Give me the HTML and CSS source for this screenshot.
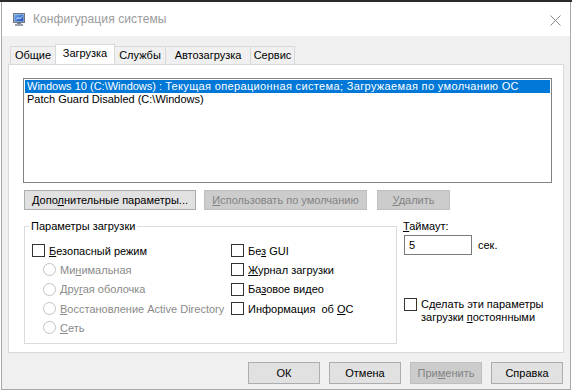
FILE: index.html
```html
<!DOCTYPE html>
<html lang="ru">
<head>
<meta charset="utf-8">
<title>Конфигурация системы</title>
<link rel="stylesheet" href="styles.css">
</head>
<body>
<div class="strip"></div>
<div class="window">
  <div class="titlebar">
    <svg class="app-icon" width="12" height="13" viewBox="0 0 12 13">
      <defs>
        <linearGradient id="scr" x1="0" y1="0" x2="1" y2="1">
          <stop offset="0" stop-color="#6aa8f0"/>
          <stop offset="1" stop-color="#1c4fb8"/>
        </linearGradient>
      </defs>
      <rect x="0.5" y="0.5" width="11" height="9" fill="#c8ccd6" stroke="#6f7685"/>
      <rect x="1.5" y="1.5" width="9" height="7" fill="url(#scr)"/>
      <path d="M3 6.5 L5 4.5 L6.5 6 L9 3.5" stroke="#e8f0ff" stroke-width="1" fill="none"/>
      <rect x="4" y="10" width="4" height="1" fill="#7d8494"/>
      <rect x="2" y="11" width="8" height="2" fill="#9aa0ad"/>
    </svg>
    <span class="title">Конфигурация системы</span>
    <svg class="close" width="11" height="11" viewBox="0 0 11 11">
      <path d="M0.5 0.5 L10.5 10.5 M10.5 0.5 L0.5 10.5" stroke="#8a8a8a" stroke-width="1"/>
    </svg>
  </div>
  <div class="content">
    <div class="tabs">
      <div class="tab t1">Общие</div>
      <div class="tab t2 active">Загрузка</div>
      <div class="tab t3">Службы</div>
      <div class="tab t4">Автозагрузка</div>
      <div class="tab t5">Сервис</div>
    </div>
    <div class="panel">
      <div class="listbox">
        <div class="item selected">Windows 10 (C:\Windows) : <span class="cyr">Текущая операционная система; Загружаемая по умолчанию ОС</span></div>
        <div class="item">Patch Guard Disabled (C:\Windows)</div>
      </div>
      <div class="btnrow">
        <button class="btn wide1">Допо<u>л</u>нительные параметры...</button>
        <button class="btn wide2" disabled><u>И</u>спользовать по умолчанию</button>
        <button class="btn wide3" disabled><u>У</u>далить</button>
      </div>
      <div class="lower">
        <fieldset class="group">
          <legend>Параметры загрузки</legend>
          <div class="cols">
            <div class="col">
              <div class="row"><span class="cb"></span><span><u>Б</u>езопасный режим</span></div>
              <div class="row sub dis"><span class="rb"></span><span>Ми<u>н</u>имальная</span></div>
              <div class="row sub dis"><span class="rb"></span><span>Дру<u>г</u>ая оболочка</span></div>
              <div class="row sub dis"><span class="rb"></span><span><u>В</u>осстановление Active Directory</span></div>
              <div class="row sub dis"><span class="rb"></span><span><u>С</u>еть</span></div>
            </div>
            <div class="col right">
              <div class="row"><span class="cb"></span><span>Бе<u>з</u> GUI</span></div>
              <div class="row"><span class="cb"></span><span><u>Ж</u>урнал загрузки</span></div>
              <div class="row"><span class="cb"></span><span>Ба<u>з</u>овое видео</span></div>
              <div class="row"><span class="cb"></span><span>Информация&nbsp; об <u>О</u>С</span></div>
            </div>
          </div>
        </fieldset>
        <div class="side">
          <div class="tlabel"><u>Т</u>аймаут:</div>
          <div class="trow">
            <div class="input">5</div>
            <span>сек.</span>
          </div>
          <div class="persist">
            <span class="cb"></span>
            <span>Сделать эти параметры<br>загрузки <u>п</u>остоянными</span>
          </div>
        </div>
      </div>
    </div>
    <div class="footer">
      <button class="btn fbtn">ОК</button>
      <button class="btn fbtn">Отмена</button>
      <button class="btn fbtn" disabled>При<u>м</u>енить</button>
      <button class="btn fbtn">Справка</button>
    </div>
  </div>
</div>
</body>
</html>
```
FILE: styles.css
```css
html, body {
  margin: 0;
  padding: 0;
  background: #ffffff;
}
body {
  width: 572px;
  height: 391px;
  overflow: hidden;
  font-family: "Liberation Sans", Arial, sans-serif;
  font-size: 11px;
  color: #000;
}
u { text-decoration: underline; text-underline-offset: 1px; }
.strip {
  height: 2px;
  background: #2b2b2b;
}
.window {
  margin-left: 1px;
  width: 568px;
  height: 387px;
  border: 1px solid #a9a9a9;
  border-top: none;
  display: flex;
  flex-direction: column;
  background: #f0f0f0;
}
.titlebar {
  height: 34px;
  background: #ffffff;
  display: flex;
  align-items: center;
  padding-left: 11px;
  padding-right: 9px;
}
.app-icon { margin-top: 1px; }
.title {
  margin-left: 8px;
  font-size: 12px;
  color: #9b9b9b;
  flex: 1;
  letter-spacing: 0.1px;
}
.close { margin-top: 2px; }
.content {
  flex: 1;
  padding: 8px 6px 0 6px;
  display: flex;
  flex-direction: column;
}
.tabs {
  display: flex;
  height: 20px;
  padding-left: 2px;
  position: relative;
  z-index: 1;
}
.tab {
  margin-top: 2px;
  height: 17px;
  border: 1px solid #d9d9d9;
  border-bottom: none;
  border-right: none;
  background: #f0f0f0;
  display: flex;
  align-items: center;
  justify-content: center;
  line-height: 1;
}
.tab.t5 { border-right: 1px solid #d9d9d9; }
.t1 { width: 44px; }
.t2 { width: 60px; }
.t3 { width: 50px; }
.t4 { width: 84px; }
.t5 { width: 43px; }
.tab.active {
  margin-top: 0;
  height: 20px;
  background: #ffffff;
  border-right: 1px solid #d9d9d9;
  margin-bottom: -1px;
  align-items: flex-start;
  padding-top: 3px;
  box-sizing: border-box;
}
.tab.active + .tab { border-left: none; }
.panel {
  border: 1px solid #d9d9d9;
  background: #ffffff;
  padding: 13px 0 0 14px;
  box-sizing: border-box;
  height: 289px;
  width: 556px;
}
.listbox {
  width: 529px;
  height: 105px;
  border: 1px solid #828282;
  box-sizing: border-box;
  padding: 1px;
}
.item {
  height: 13px;
  line-height: 13px;
  padding-left: 2px;
  white-space: nowrap;
}
.item .cyr { letter-spacing: 0.35px; }
.item.selected {
  background: #0078d7;
  color: #ffffff;
}
.btnrow {
  display: flex;
  margin-top: 7px;
  padding-left: 1px;
  gap: 8px;
}
.btn {
  height: 20px;
  font-family: inherit;
  font-size: 11px;
  background: #e1e1e1;
  border: 1px solid #adadad;
  color: #000;
  padding: 0;
  margin: 0;
  line-height: 1;
}
.btn:disabled {
  background: #cccccc;
  border-color: #bfbfbf;
  color: #838383;
}
.wide1 { width: 172px; }
.wide2 { width: 163px; }
.wide3 { width: 73px; margin-left: 2px; }
.lower {
  display: flex;
  margin-top: 10px;
  padding-left: 1px;
}
.group {
  margin: 0;
  width: 373px;
  min-width: 0;
  height: 124px;
  box-sizing: border-box;
  border: 1px solid #dcdcdc;
  padding: 0 0 0 4px;
  flex: none;
}
.group legend {
  padding: 0 2px;
  line-height: 13px;
}
.cols {
  display: flex;
  padding-top: 8px;
}
.col {
  width: 199px;
  padding-left: 3px;
  flex: none;
}
.col.right {
  padding-left: 0;
  width: auto;
  flex: 1;
}
.row {
  height: 19.33px;
  display: flex;
  align-items: center;
  gap: 4px;
  white-space: nowrap;
}
.row.sub { padding-left: 11px; }
.row.dis { color: #8a8a8a; }
.cb {
  width: 11px;
  height: 11px;
  border: 1px solid #333333;
  background: #ffffff;
  flex: none;
}
.rb {
  width: 11px;
  height: 11px;
  border: 1px solid #c3c3c3;
  border-radius: 50%;
  background: #ffffff;
  flex: none;
}
.side {
  margin-left: 6px;
  margin-top: 0;
  display: flex;
  flex-direction: column;
  flex: 1;
}
.tlabel { line-height: 13px; }
.trow {
  display: flex;
  align-items: center;
  margin-top: 2px;
  gap: 6px;
}
.input {
  width: 68px;
  height: 20px;
  box-sizing: border-box;
  border: 1px solid #7a7a7a;
  background: #fff;
  padding-left: 4px;
  line-height: 18px;
  margin-left: 1px;
}
.persist {
  display: flex;
  margin-top: 43px;
  margin-left: 1px;
  gap: 4px;
  line-height: 13px;
  white-space: nowrap;
}
.footer {
  display: flex;
  justify-content: flex-end;
  gap: 9px;
  padding-top: 9px;
  padding-right: 1px;
}
.fbtn {
  width: 72px;
  height: 22px;
}
```
